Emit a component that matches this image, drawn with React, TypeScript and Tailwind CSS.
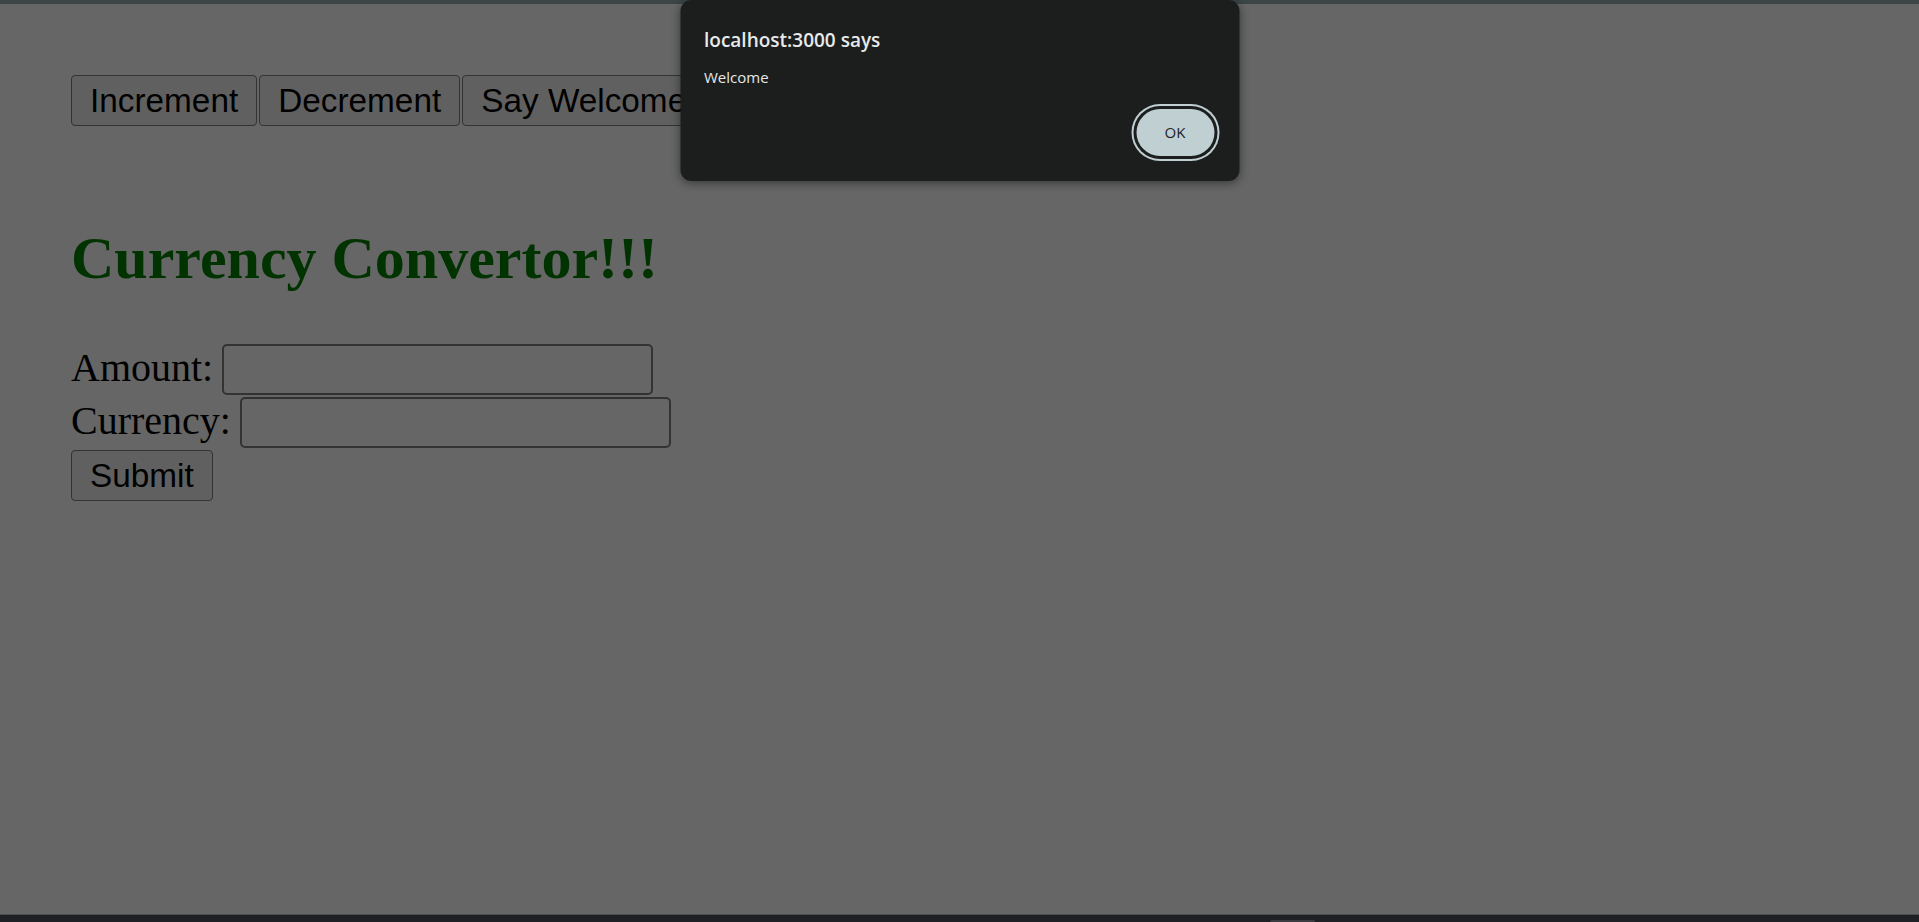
export default function App() {
  return (
    <div className="relative flex h-[922px] w-full flex-col overflow-hidden bg-[#666666]">
      {/* browser chrome strip at the top */}
      <div className="h-[4px] w-full bg-[#3c4646]" />

      <main className="flex flex-col pl-[71px] pt-[71px]" style={{ fontFamily: '"Liberation Serif", "Times New Roman", serif' }}>
        <div className="flex gap-[2px]" style={{ fontFamily: '"Liberation Sans", Arial, sans-serif' }}>
          <button className="rounded-[4px] border border-[#333333] bg-[#606060] px-[18px] py-[5px] text-[33.33px] leading-[39px] text-black">Increment</button>
          <button className="rounded-[4px] border border-[#333333] bg-[#606060] px-[18px] py-[5px] text-[33.33px] leading-[39px] text-black">Decrement</button>
          <button className="rounded-[4px] border border-[#333333] bg-[#606060] px-[18px] py-[5px] text-[33.33px] leading-[39px] text-black">Say Welcome</button>
        </div>

        <h1 className="mt-[98px] text-[60px] font-bold leading-[69px] text-[#003300]">Currency Convertor!!!</h1>

        <form className="mt-[51px] flex flex-col gap-[2px]" onSubmit={(e) => e.preventDefault()}>
          <div className="flex h-[51px] items-center gap-[9px]">
            <label className="pb-[3px] text-[40px] leading-[46px] text-black">Amount:</label>
            <input className="h-[51px] w-[431px] rounded-[5px] border-2 border-[#333333] bg-[#666666] outline-none" />
          </div>
          <div className="flex h-[51px] items-center gap-[9px]">
            <label className="pb-[3px] text-[40px] leading-[46px] text-black">Currency:</label>
            <input className="h-[51px] w-[431px] rounded-[5px] border-2 border-[#333333] bg-[#666666] outline-none" />
          </div>
          <div className="flex" style={{ fontFamily: '"Liberation Sans", Arial, sans-serif' }}>
            <button type="submit" className="rounded-[4px] border border-[#333333] bg-[#606060] px-[18px] py-[5px] text-[33.33px] leading-[39px] text-black">Submit</button>
          </div>
        </form>
      </main>

      {/* taskbar edge */}
      <div className="mt-auto flex h-[8px] w-full flex-col">
        <div className="h-[1px] w-full bg-[#4c4c4c]" />
        <div className="flex flex-1 items-end justify-start bg-[#1f2026] pl-[1270px]">
          <div className="h-[2px] w-[45px] rounded-t-[2px] bg-[#3b3c42]" />
        </div>
      </div>

      {/* alert dialog */}
      <div
        className="absolute left-1/2 top-0 flex h-[181px] w-[559px] -translate-x-1/2 flex-col rounded-[11px] bg-[#1c1e1e] pb-[25px] pl-[24px] pr-[25px] pt-[28px] shadow-[0_2px_10px_rgba(0,0,0,0.45)]"
        style={{ fontFamily: '"Open Sans", "Noto Sans", sans-serif' }}
      >
        <div className="text-[19px] font-semibold leading-[24px] text-[#e8eaea]">localhost:3000 says</div>
        <div className="mt-[15px] text-[15px] leading-[20px] text-[#e4e7e7]">Welcome</div>
        <button className="mt-auto flex h-[47px] w-[78px] items-center justify-center self-end rounded-full bg-[#c0cfd1] text-[15px] text-[#1c2426] shadow-[0_0_0_3px_#1c1e1e,0_0_0_5px_#c0cfd1]">
          OK
        </button>
      </div>
    </div>
  );
}
